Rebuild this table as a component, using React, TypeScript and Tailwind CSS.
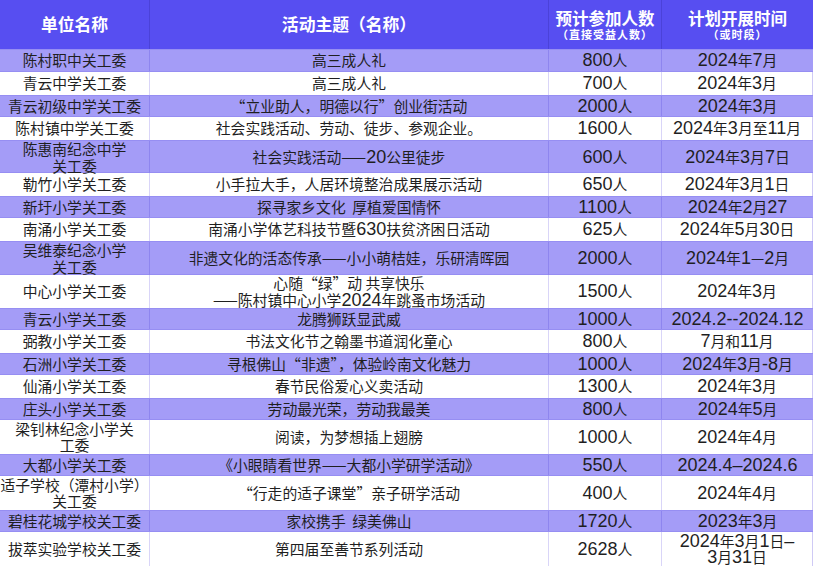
import React from "react";

type Row = {
  a: string[];
  b: string[];
  c: string;
  d: string[];
  h: string;
};

const rows: Row[] = [
  { a: ["陈村职中关工委"], b: ["高三成人礼"], c: "800人", d: ["2024年7月"], h: "h-[23px]" },
  { a: ["青云中学关工委"], b: ["高三成人礼"], c: "700人", d: ["2024年3月"], h: "h-[23px]" },
  { a: ["青云初级中学关工委"], b: ["“立业助人，明德以行”创业街活动"], c: "2000人", d: ["2024年3月"], h: "h-[22px]" },
  { a: ["陈村镇中学关工委"], b: ["社会实践活动、劳动、徒步、参观企业。"], c: "1600人", d: ["2024年3月至11月"], h: "h-[23px]" },
  { a: ["陈惠南纪念中学", "关工委"], b: ["社会实践活动——20公里徒步"], c: "600人", d: ["2024年3月7日"], h: "h-[33px]" },
  { a: ["勒竹小学关工委"], b: ["小手拉大手，人居环境整治成果展示活动"], c: "650人", d: ["2024年3月1日"], h: "h-[23px]" },
  { a: ["新圩小学关工委"], b: ["探寻家乡文化\u00a0\u00a0厚植爱国情怀"], c: "1100人", d: ["2024年2月27"], h: "h-[22px]" },
  { a: ["南涌小学关工委"], b: ["南涌小学体艺科技节暨630扶贫济困日活动"], c: "625人", d: ["2024年5月30日"], h: "h-[23px]" },
  { a: ["吴维泰纪念小学", "关工委"], b: ["非遗文化的活态传承——小小萌桔娃，乐研清晖园"], c: "2000人", d: ["2024年1—2月"], h: "h-[34px]" },
  { a: ["中心小学关工委"], b: ["心随“绿”动 共享快乐", "——陈村镇中心小学2024年跳蚤市场活动"], c: "1500人", d: ["2024年3月"], h: "h-[33px]" },
  { a: ["青云小学关工委"], b: ["龙腾狮跃显武威"], c: "1000人", d: ["2024.2--2024.12"], h: "h-[22px]" },
  { a: ["弼教小学关工委"], b: ["书法文化节之翰墨书道润化童心"], c: "800人", d: ["7月和11月"], h: "h-[23px]" },
  { a: ["石洲小学关工委"], b: ["寻根佛山“非遗”，体验岭南文化魅力"], c: "1000人", d: ["2024年3月-8月"], h: "h-[22px]" },
  { a: ["仙涌小学关工委"], b: ["春节民俗爱心义卖活动"], c: "1300人", d: ["2024年3月"], h: "h-[23px]" },
  { a: ["庄头小学关工委"], b: ["劳动最光荣，劳动我最美"], c: "800人", d: ["2024年5月"], h: "h-[22px]" },
  { a: ["梁钊林纪念小学关", "工委"], b: ["阅读，为梦想插上翅膀"], c: "1000人", d: ["2024年4月"], h: "h-[34px]" },
  { a: ["大都小学关工委"], b: ["《小眼睛看世界——大都小学研学活动》"], c: "550人", d: ["2024.4–2024.6"], h: "h-[22px]" },
  { a: ["适子学校（潭村小学）", "关工委"], b: ["“行走的适子课堂”亲子研学活动"], c: "400人", d: ["2024年4月"], h: "h-[34px]" },
  { a: ["碧桂花城学校关工委"], b: ["家校携手\u00a0\u00a0绿美佛山"], c: "1720人", d: ["2023年3月"], h: "h-[22px]" },
  { a: ["拔萃实验学校关工委"], b: ["第四届至善节系列活动"], c: "2628人", d: ["2024年3月1日–", "3月31日"], h: "h-[34px]" },
];

function Mixed({ s }: { s: string }) {
  const parts = s.split(/([\x21-\x7E\u2013]+)/);
  return (
    <>
      {parts.map((p, i) =>
        /^[\x21-\x7E\u2013]+$/.test(p) ? (
          <span key={i} className="font-['Liberation_Sans',sans-serif] text-[18px] leading-[16px]">
            {p}
          </span>
        ) : (
          <span key={i}>{p}</span>
        )
      )}
    </>
  );
}

function Lines({ lines }: { lines: string[] }) {
  return (
    <div className="flex flex-col items-center">
      {lines.map((l, i) => (
        <div key={i} className="whitespace-nowrap leading-[16.5px]">
          <Mixed s={l} />
        </div>
      ))}
    </div>
  );
}

export default function App() {
  return (
    <div className="w-[813px] h-[566px] overflow-hidden bg-white font-['Noto_Sans_CJK_SC',sans-serif] text-[14.8px] text-[#1f1f1f]">
      <div className="grid grid-cols-[150px_399px_113px_1fr] h-[49px] bg-[#574ef1] text-white font-bold">
        <div className="flex items-center justify-center border-r border-[#4b42d9] text-[16.8px]">单位名称</div>
        <div className="flex items-center justify-center border-r border-[#4b42d9] text-[16.8px]">活动主题（名称）</div>
        <div className="flex flex-col items-center justify-center border-r border-[#4b42d9]">
          <div className="text-[16.5px] leading-[20px]">预计参加人数</div>
          <div className="text-[11px] leading-[13px] tracking-[1px]">（直接受益人数）</div>
        </div>
        <div className="flex flex-col items-center justify-center">
          <div className="text-[16.5px] leading-[20px]">计划开展时间</div>
          <div className="text-[11px] leading-[13px] tracking-[1px]">（或时段）</div>
        </div>
      </div>
      {rows.map((r, i) => {
        const purple = i % 2 === 0;
        const rowCls = purple
          ? "bg-[#a49cf7] border-y border-[#968ef2]"
          : "bg-white border-r border-[#cfcaf5]";
        const div = purple ? "border-r border-[#8e85ef]" : "border-r border-[#d9d5f8]";
        return (
          <div key={i} className={`grid grid-cols-[150px_399px_113px_1fr] ${r.h} ${rowCls}`}>
            <div className={`flex items-center justify-center text-center ${div}`}>
              <Lines lines={r.a} />
            </div>
            <div className={`flex items-center justify-center text-center ${div}`}>
              <Lines lines={r.b} />
            </div>
            <div className={`flex items-center justify-center text-center ${div}`}>
              <Lines lines={[r.c]} />
            </div>
            <div className="flex items-center justify-center text-center">
              <Lines lines={r.d} />
            </div>
          </div>
        );
      })}
    </div>
  );
}
